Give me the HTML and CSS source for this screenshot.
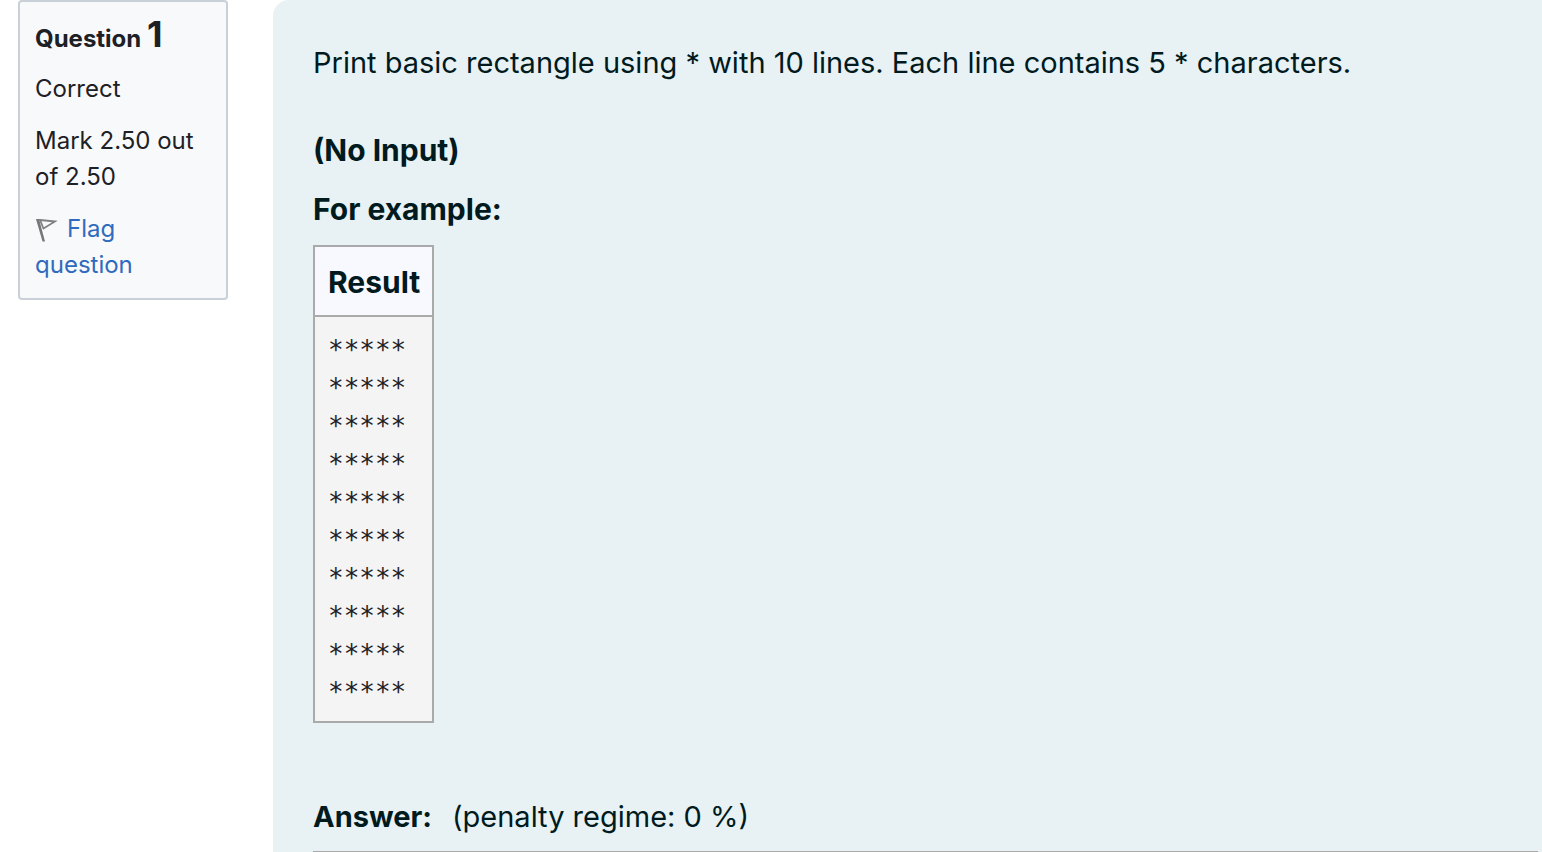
FILE: index.html
```html
<!DOCTYPE html>
<html lang="en">
<head>
<meta charset="utf-8">
<title>Question 1</title>
<link rel="stylesheet" href="styles.css">
</head>
<body>
<main class="question">
  <aside class="info">
    <h3 class="number">Question <span class="qno">1</span></h3>
    <div class="state">Correct</div>
    <div class="grade">Mark 2.50 out of 2.50</div>
    <a class="flag" href="#"><svg class="flag-icon" viewBox="0 0 24 26" aria-hidden="true"><path d="M1 2H4L10 24.500H7.500Z" fill="#777"/><path d="M5 3 20 4.500 8.500 11.500Z" fill="none" stroke="#808080" stroke-width="1.800"/></svg>Flag question</a>
  </aside>
  <section class="formulation">
    <p class="prompt">Print basic rectangle using * with 10 lines. Each line contains 5 * characters.</p>
    <p class="strong">(No Input)</p>
    <p class="strong">For example:</p>
    <table class="example">
      <thead><tr><th scope="col">Result</th></tr></thead>
      <tbody><tr><td><pre class="output">*****
*****
*****
*****
*****
*****
*****
*****
*****
*****</pre></td></tr></tbody>
    </table>
    <div class="answer-label"><label class="strong-label" for="answer">Answer:</label><span>(penalty regime: 0 %)</span></div>
    <textarea class="answer" id="answer"></textarea>
  </section>
</main>
</body>
</html>
```
FILE: styles.css
```css
* { box-sizing: border-box; }
body {
  margin: 0;
  height: 100vh;
  overflow: hidden;
  background: #fff;
  color: #1d2125;
  font-family: Inter, "Liberation Sans", sans-serif;
}
.question {
  display: flex;
  align-items: flex-start;
  gap: 45px;
  padding-left: 18px;
}
.info {
  flex: 0 0 210px;
  padding: 14px 15px 15px;
  border: 2px solid #cad0d7;
  border-radius: 4px;
  background: #f8f9fb;
  font-size: 24px;
  line-height: 36px;
}
.number { margin: 0 0 14px; font-size: 24px; line-height: 36px; }
.qno { font-size: 36px; line-height: 36px; }
.state, .grade { margin-bottom: 16px; }
.flag { display: block; color: #2f6bbd; text-decoration: none; }
.flag-icon { width: 24px; height: 26px; margin-right: 8px; vertical-align: -6px; }
.formulation {
  flex: 1;
  min-width: 0;
  padding: 40px 4px 0 40px;
  border-top-left-radius: 16px;
  background: #e8f1f4;
  color: #001a1e;
  font-size: 29px;
  line-height: 46px;
}
.prompt { margin: 0 0 41px; }
.strong { margin: 0 0 13px; font-size: 30px; font-weight: 700; }
.example { border-collapse: collapse; margin: 0 0 71px; }
.example th, .example td { border: 2px solid #aaa; padding: 14px 12px 10px 13px; text-align: left; }
.example th { padding-top: 12px; background: #f8f8ff; font-size: 30px; }
.example td { background: #f4f4f4; }
.output { margin: 0; color: #1d2125; font: 26px/38px "DejaVu Sans Mono", monospace; }
.answer-label { display: flex; gap: 20px; margin-bottom: 11px; }
.strong-label { font-weight: 700; }
.answer { display: block; width: 100%; height: 200px; border: 2px solid #a9a9a9; }
```
